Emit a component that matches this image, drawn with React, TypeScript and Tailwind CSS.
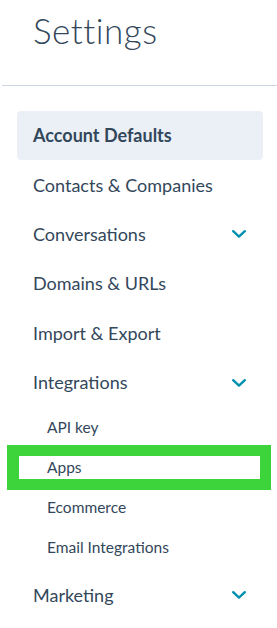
import React from "react";

const Chevron = () => (
  <svg width="14" height="8" viewBox="0 0 14 8" fill="none" className="shrink-0">
    <path d="M1.2 1.2 L7 6.6 L12.8 1.2" stroke="#0091ae" strokeWidth="2.4" strokeLinecap="round" strokeLinejoin="round" />
  </svg>
);

const MainItem = ({ label, active, chevron }: { label: string; active?: boolean; chevron?: boolean }) => (
  <div
    className={
      "flex h-[49.4px] items-center justify-between rounded pl-4 pr-[17px] text-[18px] " +
      (active ? "bg-[#eaf0f6] font-bold" : "")
    }
  >
    <span>{label}</span>
    {chevron && <Chevron />}
  </div>
);

const SubItem = ({ label, marked }: { label: string; marked?: boolean }) => (
  <div className="relative flex h-10 items-center pl-[30px] text-[15.5px]">
    <span>{label}</span>
    {marked && (
      <div className="pointer-events-none absolute left-[-10px] right-[-8px] top-[-2px] bottom-[-3px] border-[11px] border-l-[12px] border-[#3dd43b]" />
    )}
  </div>
);

export default function App() {
  return (
    <div
      className="h-[628px] w-[277px] overflow-hidden bg-white text-[#33475b]"
      style={{ fontFamily: "Lato, 'Noto Sans', sans-serif" }}
    >
      <div className="flex h-[85px] items-start pl-[33px] pt-[4px] text-[35px] font-light tracking-[0.5px]">
        Settings
      </div>
      <div className="ml-[2px] h-px bg-[#cbd6e2]" />
      <div className="pl-[17px] pr-[14px] pt-[25px]">
        <MainItem label="Account Defaults" active />
        <MainItem label="Contacts & Companies" />
        <MainItem label="Conversations" chevron />
        <MainItem label="Domains & URLs" />
        <MainItem label="Import & Export" />
        <MainItem label="Integrations" chevron />
        <div className="pb-[3px]">
          <SubItem label="API key" />
          <SubItem label="Apps" marked />
          <SubItem label="Ecommerce" />
          <SubItem label="Email Integrations" />
        </div>
        <MainItem label="Marketing" chevron />
      </div>
    </div>
  );
}
